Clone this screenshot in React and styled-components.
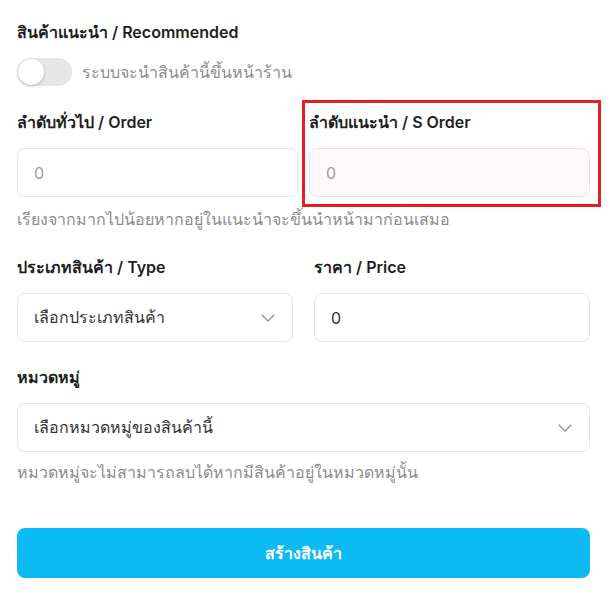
import { createGlobalStyle, styled } from "styled-components"

const GlobalStyle = createGlobalStyle`
  * { box-sizing: border-box; }
  body {
    margin: 0;
    background: #ffffff;
    font-family: Inter, "Noto Sans", "Liberation Sans", sans-serif;
    color: #1f1f1f;
  }
`

const Chevron = () => (
  <svg width="14" height="8" viewBox="0 0 14 8" fill="none">
    <path d="M1 1l6 6 6-6" stroke="#8f8f8f" strokeWidth="1.2" strokeLinecap="round" strokeLinejoin="round" />
  </svg>
)

const App = () => {
  return (
    <>
      <GlobalStyle />
      <Form>
        <Label>สินค้าแนะนำ / Recommended</Label>
        <ToggleRow>
          <Toggle>
            <Knob />
          </Toggle>
          <ToggleText>ระบบจะนำสินค้านี้ขึ้นหน้าร้าน</ToggleText>
        </ToggleRow>

        <Row gap={11} top={25}>
          <Field>
            <Label>ลำดับทั่วไป / Order</Label>
            <Input placeholder="0" />
          </Field>
          <Field>
            <Label>ลำดับแนะนำ / S Order</Label>
            <Input placeholder="0" tinted />
            <Highlight />
          </Field>
        </Row>
        <Help top={11}>เรียงจากมากไปน้อยหากอยู่ในแนะนำจะขึ้นนำหน้ามาก่อนเสมอ</Help>

        <Row gap={21} top={26}>
          <Field>
            <Label>ประเภทสินค้า / Type</Label>
            <Select>
              <span>เลือกประเภทสินค้า</span>
              <Chevron />
            </Select>
          </Field>
          <Field>
            <Label>ราคา / Price</Label>
            <Input defaultValue="0" />
          </Field>
        </Row>

        <Section>
          <Label>หมวดหมู่</Label>
          <Select>
            <span>เลือกหมวดหมู่ของสินค้านี้</span>
            <Chevron />
          </Select>
        </Section>
        <Help top={9}>หมวดหมู่จะไม่สามารถลบได้หากมีสินค้าอยู่ในหมวดหมู่นั้น</Help>

        <SubmitButton>สร้างสินค้า</SubmitButton>
      </Form>
    </>
  )
}

const Form = styled.div`
  width: 610px;
  padding: 21px 20px 26px 17px;
  display: flex;
  flex-direction: column;
`

const Label = styled.div`
  font-size: 16px;
  line-height: 22px;
  font-weight: 600;
  color: #1f1f1f;
`

const ToggleRow = styled.div`
  display: flex;
  align-items: center;
  gap: 10px;
  margin-top: 15px;
`

const Toggle = styled.div`
  width: 55px;
  height: 28px;
  border-radius: 14px;
  background: #e6e6e6;
  padding: 1px;
  display: flex;
  align-items: center;
`

const Knob = styled.div`
  width: 26px;
  height: 26px;
  border-radius: 50%;
  background: #ffffff;
  box-shadow: 0 1px 3px rgba(0, 0, 0, 0.25);
`

const ToggleText = styled.span`
  font-size: 16px;
  color: #8c8c8c;
`

const Row = styled.div`
  display: grid;
  grid-template-columns: 1fr 1fr;
  column-gap: ${({ gap }) => gap}px;
  margin-top: ${({ top }) => top}px;
`

const Field = styled.div`
  position: relative;
  display: flex;
  flex-direction: column;
  gap: 15px;
`

const Section = styled(Field)`
  margin-top: 24px;
`

const Input = styled.input`
  height: 49px;
  width: 100%;
  border: 1px solid #e6e6e6;
  border-radius: 8px;
  padding: 0 16px;
  font-family: inherit;
  font-size: 16px;
  color: #333333;
  background: ${({ tinted }) => (tinted ? '#fdf9fa' : '#ffffff')};
  outline: none;

  &::placeholder {
    color: #9c9c9c;
  }
`

const Select = styled.div`
  height: 49px;
  border: 1px solid #e6e6e6;
  border-radius: 8px;
  padding: 0 17px 0 16px;
  display: flex;
  align-items: center;
  justify-content: space-between;
  font-size: 16px;
  color: #333333;
`

const Highlight = styled.div`
  position: absolute;
  top: -11px;
  bottom: -10px;
  left: -7px;
  right: -11px;
  border: 3px solid #e31e24;
  pointer-events: none;
`

const Help = styled.div`
  margin-top: ${({ top }) => top}px;
  font-size: 16px;
  line-height: 22px;
  color: #8c8c8c;
`

const SubmitButton = styled.button`
  margin-top: 45px;
  height: 50px;
  border: none;
  border-radius: 8px;
  background: #0ebaf3;
  color: #ffffff;
  font-family: inherit;
  font-size: 16px;
  font-weight: 700;
  cursor: pointer;
`

export default App
